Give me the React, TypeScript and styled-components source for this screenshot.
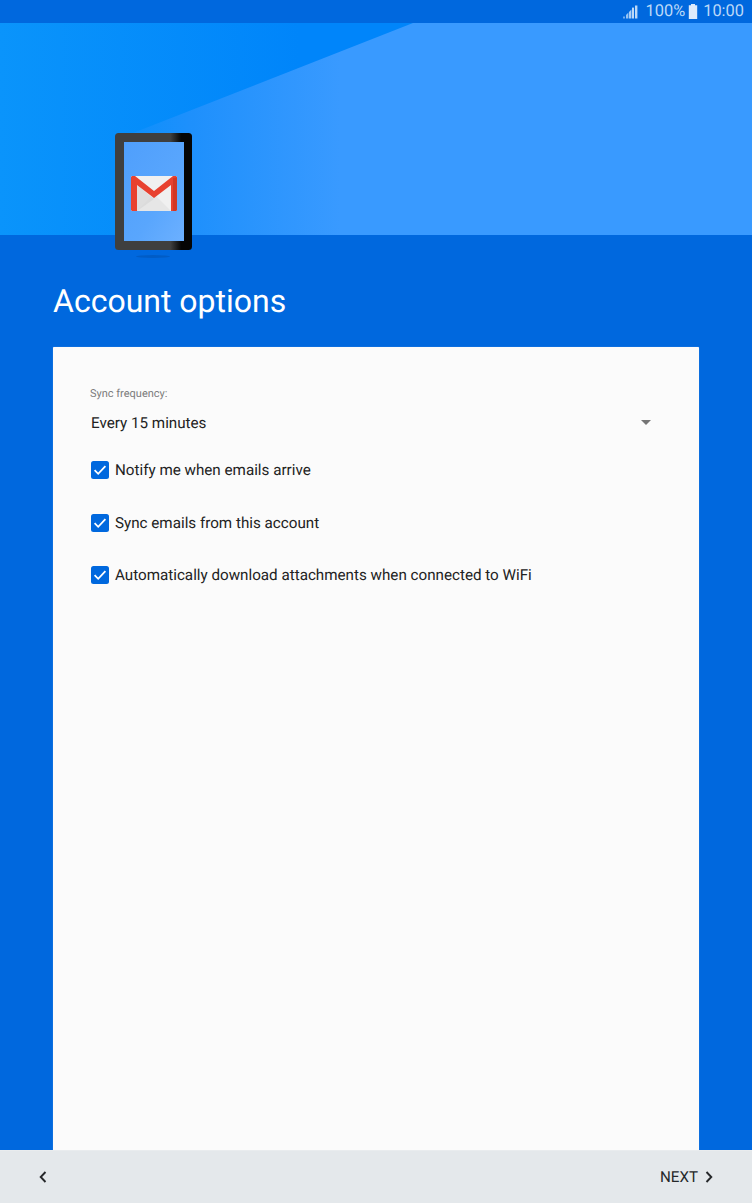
import React from "react";
import styled, { createGlobalStyle } from "styled-components";

const Global = createGlobalStyle`
  html, body { margin: 0; padding: 0; background: #0068de; }
  body { font-family: Roboto, "Liberation Sans", sans-serif; text-rendering: geometricPrecision; }
  * { box-sizing: border-box; }
`;
const Page = styled.div`
  width: 752px; height: 1203px; display: flex; flex-direction: column;
  background: #0068de; overflow: hidden;
`;
const StatusBar = styled.div`
  height: 23px; flex: none; display: flex; align-items: center; justify-content: flex-end;
  padding-right: 8px; background: #0068de; color: #bcd9f8; font-size: 16.4px; line-height: 23px;
`;
const StatusText = styled.span`
  margin-left: ${(p: { $gap: number }) => p.$gap}px;
`;
const Hero = styled.div`
  height: 212px; flex: none; position: relative; background: #0a8cfb;
`;
const HeroArt = styled.svg`
  position: absolute; left: 0; top: 0; display: block;
`;
const Phone = styled.svg`
  position: absolute; left: 112px; top: 108px; display: block; z-index: 2;
`;
const Title = styled.h1`
  margin: 48px 0 0 53px; height: 64px; color: #fff; font-weight: 400; font-size: 32px;
  line-height: 36px; flex: none;
`;
const Card = styled.div`
  margin: 0 53px; flex: 1; background: #fbfbfb; padding: 40px 37px 0;
  border-radius: 1px 1px 0 0; box-shadow: 0 0 1px rgba(255,255,255,0.5);
`;
const FieldLabel = styled.div`
  font-size: 11px; line-height: 14px; color: #7b7b7b;
`;
const Select = styled.div`
  display: flex; align-items: center; justify-content: space-between;
  margin-top: 11px; height: 22px; padding: 0 11px 0 1px; font-size: 15.2px; color: #222;
`;
const Caret = styled.span`
  width: 0; height: 0; border-left: 5px solid transparent; border-right: 5px solid transparent;
  border-top: 5px solid #757575; margin-top: -2px;
`;
const OptionList = styled.div`
  display: flex; flex-direction: column; gap: 32.5px; margin-top: 26px; padding-left: 1px;
`;
const Option = styled.label`
  display: flex; align-items: center; height: 20px; gap: 6px; font-size: 15.2px; color: #222;
`;
const Check = styled.span`
  width: 18px; height: 18px; border-radius: 2.5px; background: #0068de;
  display: flex; align-items: center; justify-content: center; flex: none;
`;
const Footer = styled.div`
  height: 53px; flex: none; background: #e4e8eb; border-top: 1px solid #e9ecee;
  display: flex; align-items: center; justify-content: space-between; padding: 0 38px;
  color: #26282a; font-size: 15.2px;
`;
const FooterButton = styled.span`
  display: flex; align-items: center; gap: 6px;
`;

const CheckMark = () => (
  <Check>
    <svg width="16" height="16" viewBox="0 0 16 16" fill="none">
      <path d="M2.6 8.2 6.2 11.8 13.4 4.2" stroke="#fff" strokeWidth="1.8" />
    </svg>
  </Check>
);

const Chevron = ({ left }: { left?: boolean }) => (
  <svg width="10" height="14" viewBox="0 0 10 14" fill="none">
    <path d={left ? "M7.5 2 2.7 7 7.5 12" : "M2.5 2 7.3 7 2.5 12"} stroke="#26282a" strokeWidth="1.9" />
  </svg>
);

const options = [
  "Notify me when emails arrive",
  "Sync emails from this account",
  "Automatically download attachments when connected to WiFi",
];

export default function App() {
  return (
    <Page>
      <Global />
      <StatusBar>
        <svg width="15" height="14" viewBox="0 0 15 14" fill="#bcd9f8">
          <rect x="0" y="11.5" width="2" height="2" opacity="0.6" />
          <path d="M3 13.5V10L5.4 7.6V13.5Z" opacity="0.8" />
          <path d="M6 13.5V7L8.4 4.6V13.5Z" opacity="0.9" />
          <rect x="9" y="2.6" width="2" height="10.9" />
          <rect x="12" y="0.5" width="2.4" height="13" />
        </svg>
        <StatusText $gap={8}>100%</StatusText>
        <svg width="10" height="15" viewBox="0 0 10 15" fill="#dbeafc" style={{ marginLeft: 3 }}>
          <path d="M3 0h4v1.3h2.2V15H.8V1.3H3z" />
        </svg>
        <StatusText $gap={5}>10:00</StatusText>
      </StatusBar>
      <Hero>
        <HeroArt width="752" height="212" viewBox="0 0 752 212">
          <defs>
            <linearGradient id="lft" gradientUnits="userSpaceOnUse" x1="0" y1="0" x2="300" y2="0">
              <stop offset="0" stopColor="#0a94fb" />
              <stop offset="1" stopColor="#0085fa" />
            </linearGradient>
            <linearGradient id="rgt" gradientUnits="userSpaceOnUse" x1="110" y1="0" x2="340" y2="0">
              <stop offset="0" stopColor="#078ffb" />
              <stop offset="0.35" stopColor="#1e90fc" />
              <stop offset="1" stopColor="#399aff" />
            </linearGradient>
          </defs>
          <rect width="752" height="212" fill="url(#lft)" />
          <polygon points="413,0 752,0 752,212 110,212 110,119" fill="url(#rgt)" />
        </HeroArt>
        <Phone width="84" height="130" viewBox="0 0 84 130">
          <defs>
            <linearGradient id="bez" x1="0" y1="0" x2="1" y2="0">
              <stop offset="0" stopColor="#3f3f3f" />
              <stop offset="0.72" stopColor="#3f3f3f" />
              <stop offset="0.86" stopColor="#050505" />
              <stop offset="1" stopColor="#050505" />
            </linearGradient>
            <linearGradient id="scr" x1="0" y1="0" x2="1" y2="1">
              <stop offset="0" stopColor="#4f9ffc" />
              <stop offset="0.6" stopColor="#59a6fd" />
              <stop offset="1" stopColor="#6cb0ff" />
            </linearGradient>
          </defs>
          <ellipse cx="41" cy="125.5" rx="17" ry="1.5" fill="#005cc6" />
          <rect x="3" y="2" width="77" height="117" rx="3.5" fill="url(#bez)" />
          <rect x="12" y="11" width="60" height="99" fill="url(#scr)" />
          <rect x="19" y="45" width="46" height="35" rx="1.5" fill="#f0f0f0" />
          <path d="M25 80 42 63 59 80Z" fill="#e6e6e6" />
          <path d="M25 54 42 68 46 65 25 80Z" fill="#d6d6d6" opacity="0.7" />
          <path d="M19 46.5C19 45.5 20 45 21 45H23L42 60 61 45H63C64 45 65 45.5 65 46.5V78.5C65 79.5 64 80 63 80H59V54L42 67 25 54V80H21C20 80 19 79.5 19 78.5Z" fill="#e8412f" />
          <path d="M61 47V80H63C64 80 65 79.5 65 78.5V46.5Z" fill="#c8331f" opacity="0.7" />
        </Phone>
      </Hero>
      <Title>Account options</Title>
      <Card>
        <FieldLabel>Sync frequency:</FieldLabel>
        <Select>
          <span>Every 15 minutes</span>
          <Caret />
        </Select>
        <OptionList>
          {options.map((o) => (
            <Option key={o}>
              <CheckMark />
              <span>{o}</span>
            </Option>
          ))}
        </OptionList>
      </Card>
      <Footer>
        <FooterButton>
          <Chevron left />
        </FooterButton>
        <FooterButton>
          NEXT
          <Chevron />
        </FooterButton>
      </Footer>
    </Page>
  );
}
